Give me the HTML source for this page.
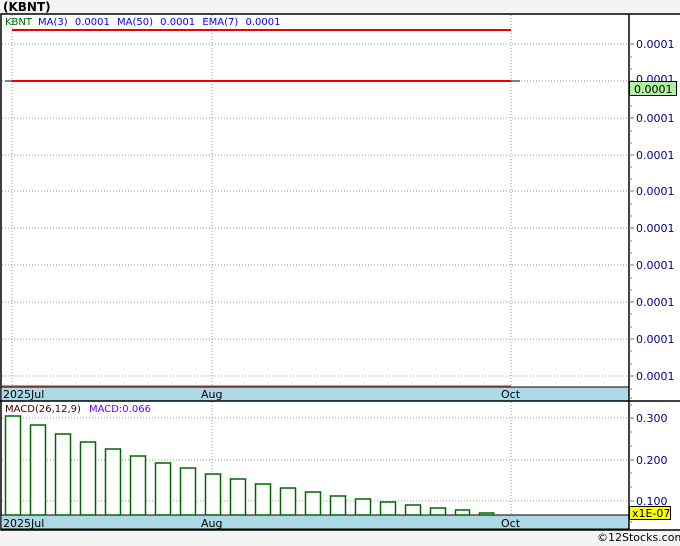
<!DOCTYPE html><html><head><style>html,body{margin:0;background:#f4f4f4;width:680px;height:546px;overflow:hidden}svg{display:block}svg text{font-family:"DejaVu Sans","Liberation Sans",sans-serif}</style></head><body>
<svg width="680" height="546" xmlns="http://www.w3.org/2000/svg">
<text x="3" y="11" font-size="12" font-weight="bold" fill="#000">(KBNT)</text>
<rect x="1" y="14" width="690" height="516" fill="#fff" stroke="#000" stroke-width="1.5"/>
<g stroke="#999" stroke-dasharray="1,2" stroke-width="1">
<line x1="2" y1="44" x2="629" y2="44"/><line x1="2" y1="81" x2="629" y2="81"/><line x1="2" y1="118" x2="629" y2="118"/><line x1="2" y1="155" x2="629" y2="155"/><line x1="2" y1="191" x2="629" y2="191"/><line x1="2" y1="228" x2="629" y2="228"/><line x1="2" y1="265" x2="629" y2="265"/><line x1="2" y1="302" x2="629" y2="302"/><line x1="2" y1="339" x2="629" y2="339"/><line x1="2" y1="376" x2="629" y2="376"/>
<line x1="12" y1="15" x2="12" y2="515"/><line x1="212" y1="15" x2="212" y2="515"/><line x1="511" y1="15" x2="511" y2="515"/>
<line x1="2" y1="418" x2="629" y2="418"/><line x1="2" y1="460" x2="629" y2="460"/><line x1="2" y1="501" x2="629" y2="501"/>
</g>
<line x1="12" y1="30" x2="511" y2="30" stroke="#e00" stroke-width="2"/>
<line x1="5" y1="81" x2="12" y2="81" stroke="#000" stroke-width="1"/>
<line x1="12" y1="81" x2="511" y2="81" stroke="#e00" stroke-width="2"/>
<line x1="511" y1="81" x2="520" y2="81" stroke="#000" stroke-width="1"/>
<line x1="2" y1="386" x2="511" y2="386" stroke="#e66" stroke-width="1.5"/>
<text x="5" y="25" font-size="10" word-spacing="4"><tspan fill="#060">KBNT</tspan><tspan fill="#00f" dx="6">MA(3) 0.0001 MA(50) 0.0001 EMA(7) 0.0001</tspan></text>
<rect x="1" y="387" width="628" height="14" fill="#add8e6" stroke="#000"/>
<rect x="1" y="515" width="628" height="14" fill="#add8e6" stroke="#000"/>
<line x1="0" y1="401" x2="680" y2="401" stroke="#000" stroke-width="1.5"/>
<line x1="629" y1="14" x2="629" y2="530" stroke="#000" stroke-width="1.5"/>
<g font-size="11" fill="#000">
<text x="3" y="398">2025Jul</text><text x="201" y="398">Aug</text><text x="501" y="398">Oct</text>
<text x="3" y="527">2025Jul</text><text x="201" y="527">Aug</text><text x="501" y="527">Oct</text>
</g>
<text x="5" y="412" font-size="10"><tspan fill="#400">MACD(26,12,9)</tspan><tspan fill="#60f" dx="8">MACD:0.066</tspan></text>
<g fill="#fff" stroke="#060" stroke-width="1.5">
<rect x="5.5" y="416" width="15" height="99"/><rect x="30.5" y="425" width="15" height="90"/><rect x="55.5" y="434" width="15" height="81"/><rect x="80.5" y="442" width="15" height="73"/><rect x="105.5" y="449" width="15" height="66"/><rect x="130.5" y="456" width="15" height="59"/><rect x="155.5" y="463" width="15" height="52"/><rect x="180.5" y="468" width="15" height="47"/><rect x="205.5" y="474" width="15" height="41"/><rect x="230.5" y="479" width="15" height="36"/><rect x="255.5" y="484" width="15" height="31"/><rect x="280.5" y="488" width="15" height="27"/><rect x="305.5" y="492" width="15" height="23"/><rect x="330.5" y="496" width="15" height="19"/><rect x="355.5" y="499" width="15" height="16"/><rect x="380.5" y="502" width="15" height="13"/><rect x="405.5" y="505" width="15" height="10"/><rect x="430.5" y="508" width="15" height="7"/><rect x="455.5" y="510" width="14" height="5"/><rect x="479.5" y="513" width="14" height="2"/>
</g>
<g stroke="#777" stroke-width="1">
<path d="M629 44h5M629 81h5M629 118h5M629 155h5M629 191h5M629 228h5M629 265h5M629 302h5M629 339h5M629 376h5M629 418h5M629 460h5M629 501h5"/>
<path d="M629 57h3M629 69h3M629 94h3M629 106h3M629 131h3M629 143h3M629 167h3M629 179h3M629 204h3M629 216h3M629 241h3M629 253h3M629 278h3M629 290h3M629 314h3M629 327h3M629 351h3M629 364h3M629 389h3M629 398h3M629 405h3M629 432h3M629 446h3M629 473h3M629 487h3M629 509h3M629 522h3"/>
</g>
<g font-size="11" fill="#00008b">
<text x="636" y="48">0.0001</text><text x="636" y="83">0.0001</text><text x="636" y="122">0.0001</text><text x="636" y="159">0.0001</text><text x="636" y="195">0.0001</text><text x="636" y="232">0.0001</text><text x="636" y="269">0.0001</text><text x="636" y="306">0.0001</text><text x="636" y="343">0.0001</text><text x="636" y="380">0.0001</text>
<text x="636" y="422">0.300</text><text x="636" y="464">0.200</text><text x="636" y="505">0.100</text>
</g>
<rect x="629.5" y="81.5" width="47" height="14" fill="#b0f0a0" stroke="#000"/>
<text x="634" y="93" font-size="11" fill="#000">0.0001</text>
<rect x="629.5" y="506.5" width="41" height="13" fill="#ff0" stroke="#000"/>
<text x="632" y="517" font-size="11" fill="#000">x1E-07</text>
<text x="597" y="541" font-size="11" fill="#000">©12Stocks.com</text>
</svg></body></html>
